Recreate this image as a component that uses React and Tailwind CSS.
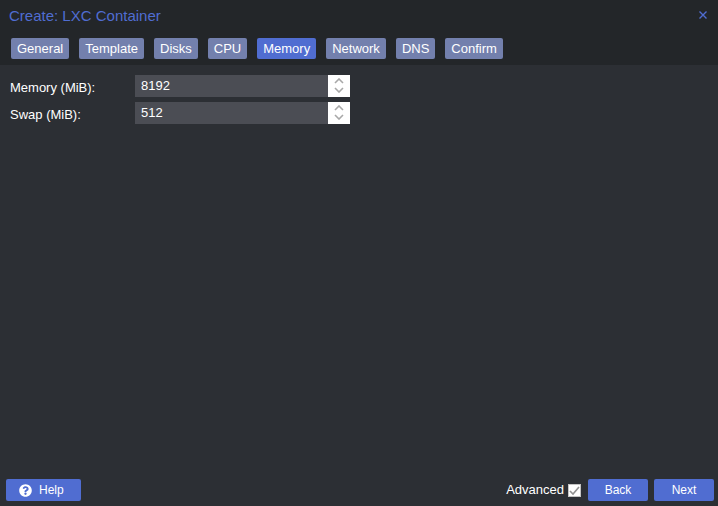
import { useState } from "react";
import { FaQuestionCircle } from "react-icons/fa";

const TABS = ["General", "Template", "Disks", "CPU", "Memory", "Network", "DNS", "Confirm"];

function SpinnerArrow({ up, label, onClick }) {
  return (
    <button
      type="button"
      aria-label={label}
      onClick={onClick}
      className={`flex h-[11px] w-full justify-center text-[#a8a8a8] ${up ? "items-end pb-[2px]" : "items-start pt-px"}`}
    >
      <svg width="10" height="6" viewBox="0 0 10 6" fill="none" stroke="currentColor" strokeWidth="1.6">
        <path d={up ? "M1 5 L5 1 L9 5" : "M1 1 L5 5 L9 1"} />
      </svg>
    </button>
  );
}

function NumberRow({ id, label, initial }) {
  const [value, setValue] = useState(initial);
  return (
    <div className="flex h-[22px]">
      <label htmlFor={id} className="w-[125px] shrink-0 pt-1 leading-[18px]">{label}</label>
      <div className="flex w-[215px]">
        <input
          id={id}
          type="text"
          inputMode="numeric"
          value={value}
          onChange={(e) => setValue(Number(e.target.value) || 0)}
          className="min-w-0 flex-1 bg-[#4b4d54] px-[6px] pb-px text-white outline-none"
        />
        <div className="flex w-[22px] flex-col bg-white">
          <SpinnerArrow up label={`Increase ${label}`} onClick={() => setValue(value + 1)} />
          <SpinnerArrow label={`Decrease ${label}`} onClick={() => setValue(Math.max(0, value - 1))} />
        </div>
      </div>
    </div>
  );
}

function ActionButton({ className, children }) {
  return (
    <button type="button" className={`flex h-[22px] items-center rounded-[2px] bg-[#506dd1] text-xs text-white ${className}`}>
      {children}
    </button>
  );
}

export default function App() {
  const [active, setActive] = useState("Memory");
  const [advanced, setAdvanced] = useState(true);
  return (
    <div className="flex min-h-screen flex-col bg-[#2c2f34] font-['Liberation_Sans',Arial,sans-serif] text-[13px] text-white">
      <header className="bg-[#232629] pb-[6px]">
        <div className="flex h-8 items-center justify-between pr-[10px] pl-[9px] text-[#506dd1]">
          <h1 className="text-[15px]">Create: LXC Container</h1>
          <button type="button" aria-label="Close" className="mb-[2px] flex size-[10px] items-center justify-center">
            <svg width="10" height="10" viewBox="0 0 10 10" stroke="currentColor" strokeWidth="1.4">
              <path d="M1.5 1.5 L8.5 8.5 M8.5 1.5 L1.5 8.5" />
            </svg>
          </button>
        </div>
        <nav className="flex gap-[10px] px-[11px] pt-[6px]">
          {TABS.map((tab) => (
            <button
              key={tab}
              type="button"
              onClick={() => setActive(tab)}
              className={`h-[21px] rounded-[2px] px-[6px] pt-px ${tab === active ? "bg-[#506dd1]" : "bg-[#7380ad]"}`}
            >
              {tab}
            </button>
          ))}
        </nav>
      </header>
      <main className="flex flex-1 flex-col gap-[5px] px-[10px] pt-[10px]">
        <NumberRow id="memory" label="Memory (MiB):" initial={8192} />
        <NumberRow id="swap" label="Swap (MiB):" initial={512} />
      </main>
      <footer className="flex items-center gap-[6px] pr-1 pb-[5px] pl-[6px]">
        <ActionButton className="w-[75px] gap-[7px] pl-[13px]">
          <FaQuestionCircle size={13} />
          Help
        </ActionButton>
        <label className="mr-px ml-auto flex items-center gap-1">
          Advanced
          <span className="relative flex size-[13px]">
            <input
              type="checkbox"
              checked={advanced}
              onChange={(e) => setAdvanced(e.target.checked)}
              className="size-[13px] appearance-none border border-[#c4c4c4] bg-white"
            />
            {advanced && (
              <svg className="pointer-events-none absolute inset-0" width="13" height="13" viewBox="0 0 13 13" fill="none" stroke="#929292" strokeWidth="1.6">
                <path d="M2 7 L5 10 L11 3" />
              </svg>
            )}
          </span>
        </label>
        <ActionButton className="w-[60px] justify-center">Back</ActionButton>
        <ActionButton className="w-[60px] justify-center">Next</ActionButton>
      </footer>
    </div>
  );
}
